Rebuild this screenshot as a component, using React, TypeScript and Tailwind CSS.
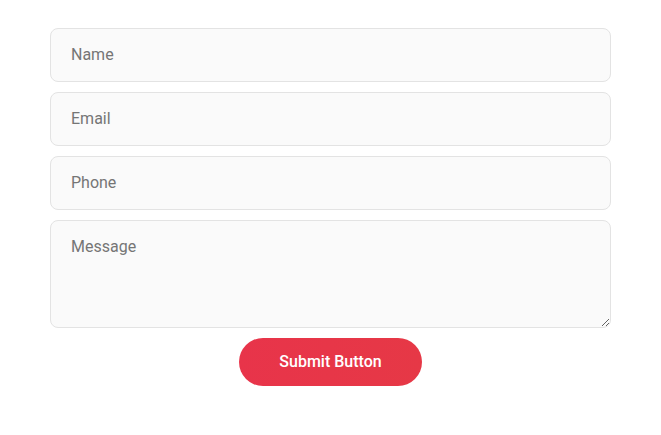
export default function App() {
  const fieldClass =
    'w-full rounded-lg border border-[#e3e3e3] bg-[#fafafa] px-[20px] text-[16px] text-[#333] placeholder:text-[#757575] outline-none';

  return (
    <main className="min-h-[435px] bg-white font-['Roboto',sans-serif]">
      <form className="mx-auto flex w-[561px] flex-col gap-[10px] pt-[28px]" onSubmit={(e) => e.preventDefault()}>
        <input type="text" placeholder="Name" className={`${fieldClass} h-[54px] pb-[2px]`} />
        <input type="email" placeholder="Email" className={`${fieldClass} h-[54px] pb-[2px]`} />
        <input type="tel" placeholder="Phone" className={`${fieldClass} h-[54px] pb-[2px]`} />
        <textarea placeholder="Message" className={`${fieldClass} block h-[108px] pt-[14px]`} />
        <div className="flex justify-center">
          <button
            type="submit"
            className="h-[48px] w-[183px] rounded-full bg-gradient-to-r from-[#e8344a] to-[#e63846] text-[16px] font-medium text-white"
          >
            Submit Button
          </button>
        </div>
      </form>
    </main>
  );
}
